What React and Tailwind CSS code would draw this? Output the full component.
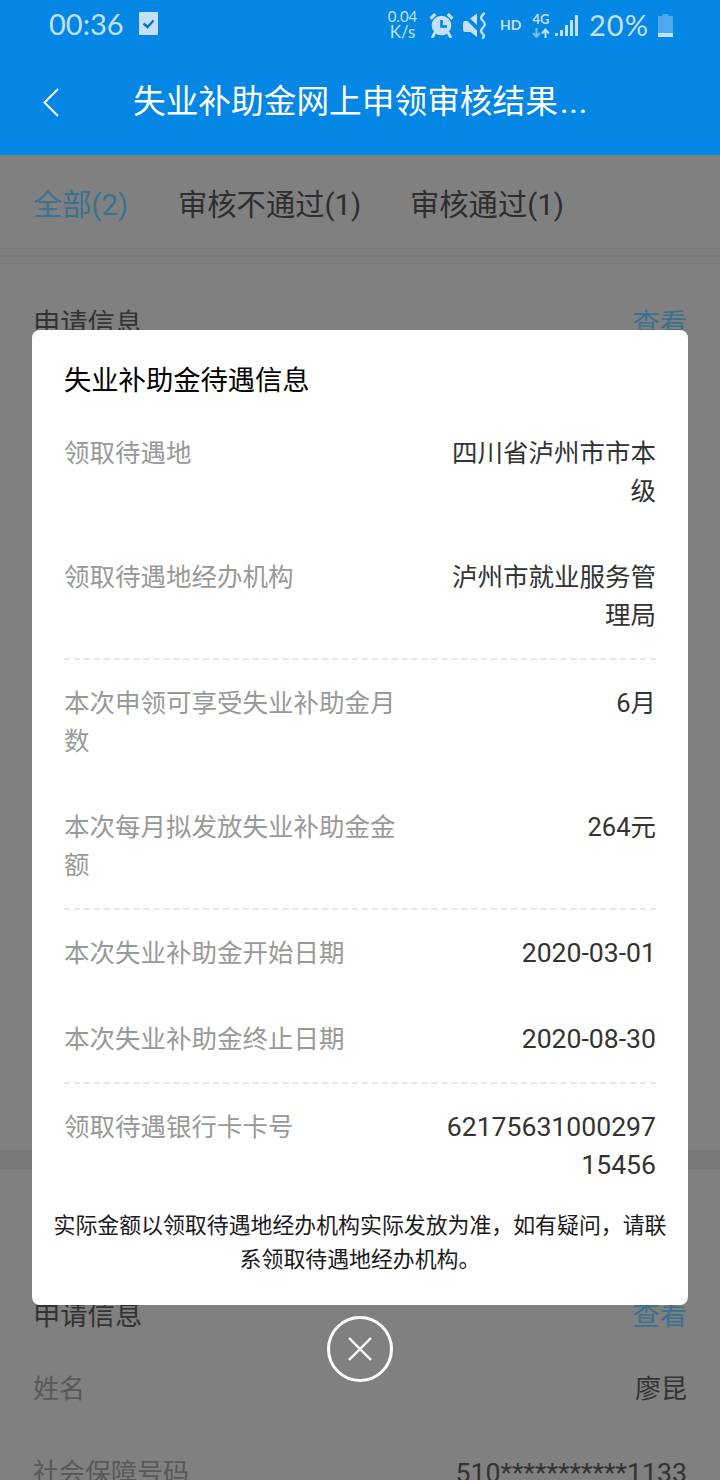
const FONT = '[font-family:Roboto,"Noto_Sans_CJK_SC",sans-serif]';

function StatusIcons() {
  const c = "#c4e1fb";
  return (
    <div className="flex items-center h-[36px] text-[#c4e1fb] [font-family:Lato,sans-serif]">
      <div className="w-[31px] ml-[387px] -mt-[2px] flex flex-col items-center font-normal">
        <span className="text-[15px] leading-[15px]">0.04</span>
        <span className="text-[17px] leading-[16px]">K/s</span>
      </div>
      <svg className="ml-[11px]" width="25" height="26" viewBox="0 0 25 26">
        <path d="M0.5 5.5 L5 1 L7.5 3 L2.5 8 Z M24.5 5.5 L20 1 L17.5 3 L22.5 8 Z" fill={c} />
        <circle cx="12.5" cy="13.5" r="9.8" fill={c} />
        <path d="M12.5 8 V14.5 H18" stroke="#0386e4" strokeWidth="2.6" fill="none" />
        <path d="M6 20.5 L3.5 25 M19 20.5 L21.5 25" stroke={c} strokeWidth="2.8" strokeLinecap="round" />
      </svg>
      <svg className="ml-[9px]" width="24" height="27" viewBox="0 0 24 27">
        <path d="M0 11 C0 9.5 1 9 2 9 H4.5 L14 18.5 V25 L7.5 20 H2 C1 20 0 19 0 18 Z" fill={c} />
        <path d="M7 6.5 L14 1.5 V13 Z" fill={c} />
        <path d="M21 1.5 C17 5 17.5 6.5 20 9 C22.5 11.5 22.5 13 20 15.5 C17.5 18 17.5 20 20 22 C21 23 21 24.5 20 26" stroke={c} strokeWidth="2.4" fill="none" strokeLinecap="round" />
      </svg>
      <span className="ml-[13px] w-[19px] text-[14px] leading-[14px] font-bold">HD</span>
      <div className="ml-[13px] w-[18px] flex flex-col items-center">
        <span className="text-[13px] leading-[13px] font-bold">4G</span>
        <svg className="mt-[2px]" width="18" height="10" viewBox="0 0 18 10">
          <path d="M4.5 0 V8 M1 5 L4.5 9 L8 5" stroke="#7cbcf0" strokeWidth="2" fill="none" />
          <path d="M13.5 10 V2 M10 5.5 L13.5 1.5 L17 5.5" stroke={c} strokeWidth="2" fill="none" />
        </svg>
      </div>
      <svg className="ml-[5px] mt-[1px]" width="23" height="21" viewBox="0 0 23 21">
        <rect x="0" y="18" width="3" height="3" rx="1" fill={c} />
        <rect x="5" y="15" width="3" height="6" fill={c} />
        <rect x="10" y="10" width="3" height="11" fill={c} />
        <rect x="15" y="5" width="3" height="16" fill={c} />
        <rect x="20" y="0" width="3" height="21" fill={c} />
      </svg>
      <span className="ml-[11px] text-[29px] leading-[30px] tracking-[1px] whitespace-nowrap">20%</span>
      <svg className="ml-[9px]" width="15" height="23" viewBox="0 0 15 23">
        <path d="M4.5 0 H10.5 V2 H14 Q15 2 15 3 V23 H0 V3 Q0 2 1 2 H4.5 Z" fill="#4fa8ee" />
        <path d="M0 19 H15 V23 H0 Z" fill={c} />
      </svg>
    </div>
  );
}

function Row({ label, value, digits }) {
  return (
    <div className="flex justify-between py-6 text-[25.5px] leading-[38px]">
      <div className="w-[340px] text-[#999999]">{label}</div>
      <div className={digits ? "w-[212px] text-right text-[#333333] break-all text-[26.6px]" : "w-[212px] text-right text-[#333333] break-all"}>{value}</div>
    </div>
  );
}

function Dash() {
  return <div className="border-t-2 border-dashed border-[#e6e6e6] h-[2px]" />;
}

export default function App() {
  return (
    <div className={`relative w-[720px] h-[1480px] overflow-hidden bg-[#808080] ${FONT}`}>
      <header className="h-[155px] bg-[#0386e4]">
        <div className="h-[50px] relative">
          <span className="absolute left-[49px] top-[6px] text-[29px] leading-[36px] text-[#c4e1fb] [font-family:Lato,sans-serif]">00:36</span>
          <svg className="absolute left-[139px] top-[12px]" width="19" height="23" viewBox="0 0 19 23">
            <rect width="19" height="23" rx="1" fill="#c4e1fb" />
            <path d="M4.5 11.5 L8.5 15 L14.5 8.5" stroke="#0a70c4" strokeWidth="2.4" fill="none" />
          </svg>
          <div className="absolute left-0 top-[7px] w-full"><StatusIcons /></div>
        </div>
        <div className="h-[105px] flex items-center pb-[1px]">
          <svg className="ml-[43px]" width="16" height="29" viewBox="0 0 16 29">
            <path d="M15 1 L1.5 14.5 L15 28" stroke="#ffffff" strokeWidth="2" fill="none" />
          </svg>
          <h1 className="ml-[74px] text-[32.7px] leading-[44px] text-white font-normal whitespace-nowrap">失业补助金网上申领审核结果<span className="pl-[2px] tracking-[0.8px]">...</span></h1>
        </div>
      </header>

      <nav className="h-[102px] border-b-2 border-[#7a7a7a] flex items-center pl-[33px] pt-[2px] text-[29.3px] text-[#2e2e2e]">
        <span className="w-[145px] text-[#3a7290]">全部(2)</span>
        <span className="w-[232px]">审核不通过(1)</span>
        <span>审核通过(1)</span>
      </nav>

      <section className="px-[33px] pt-[47px] h-[893px] flex justify-between text-[27.3px] leading-[40px] text-[#333333]">
        <span>申请信息</span>
        <span className="text-[#3a7290]">查看</span>
      </section>
      <div className="h-[19px] bg-[#787878]" />
      <section className="px-[33px] pt-[127px] text-[26px] leading-[40px] text-[#333333]">
        <div className="flex justify-between text-[27.3px]">
          <span>申请信息</span>
          <span className="text-[#3a7290]">查看</span>
        </div>
        <div className="flex justify-between mt-[33px]">
          <span className="text-[#595959]">姓名</span>
          <span>廖昆</span>
        </div>
        <div className="flex justify-between mt-[44px]">
          <span className="text-[#595959]">社会保障号码</span>
          <span className="text-[26.7px]">510***********1133</span>
        </div>
      </section>

      <div className="absolute left-[32px] top-[330px] w-[656px] rounded-[8px] bg-white px-[32px] pt-[29px] pb-[28px]">
        <h2 className="text-[27.3px] leading-[38px] font-normal text-black mt-[3px] mb-[10px]">失业补助金待遇信息</h2>
        <Row label="领取待遇地" value="四川省泸州市市本级" />
        <Row label="领取待遇地经办机构" value="泸州市就业服务管理局" />
        <Dash />
        <Row label="本次申领可享受失业补助金月数" value="6月" />
        <Row label="本次每月拟发放失业补助金金额" value="264元" />
        <Dash />
        <Row label="本次失业补助金开始日期" value="2020-03-01" digits />
        <Row label="本次失业补助金终止日期" value="2020-08-30" digits />
        <Dash />
        <Row label="领取待遇银行卡卡号" value="6217563100029715456" digits />
        <p className="-mx-[16px] mt-[1px] text-center text-[21.9px] leading-[34px] text-[#1a1a1a]">
          {"实际金额以领取待遇地经办机构实际发放为准\uFF0C如有疑问\uFF0C请联系领取待遇地经办机构\u3002"}
        </p>
      </div>

      <button className="absolute left-[327px] top-[1316px] w-[66px] h-[66px] rounded-full border-[3px] border-white flex items-center justify-center">
        <svg width="26" height="26" viewBox="0 0 26 26">
          <path d="M2 2 L24 24 M24 2 L2 24" stroke="#ffffff" strokeWidth="2.4" />
        </svg>
      </button>
    </div>
  );
}
